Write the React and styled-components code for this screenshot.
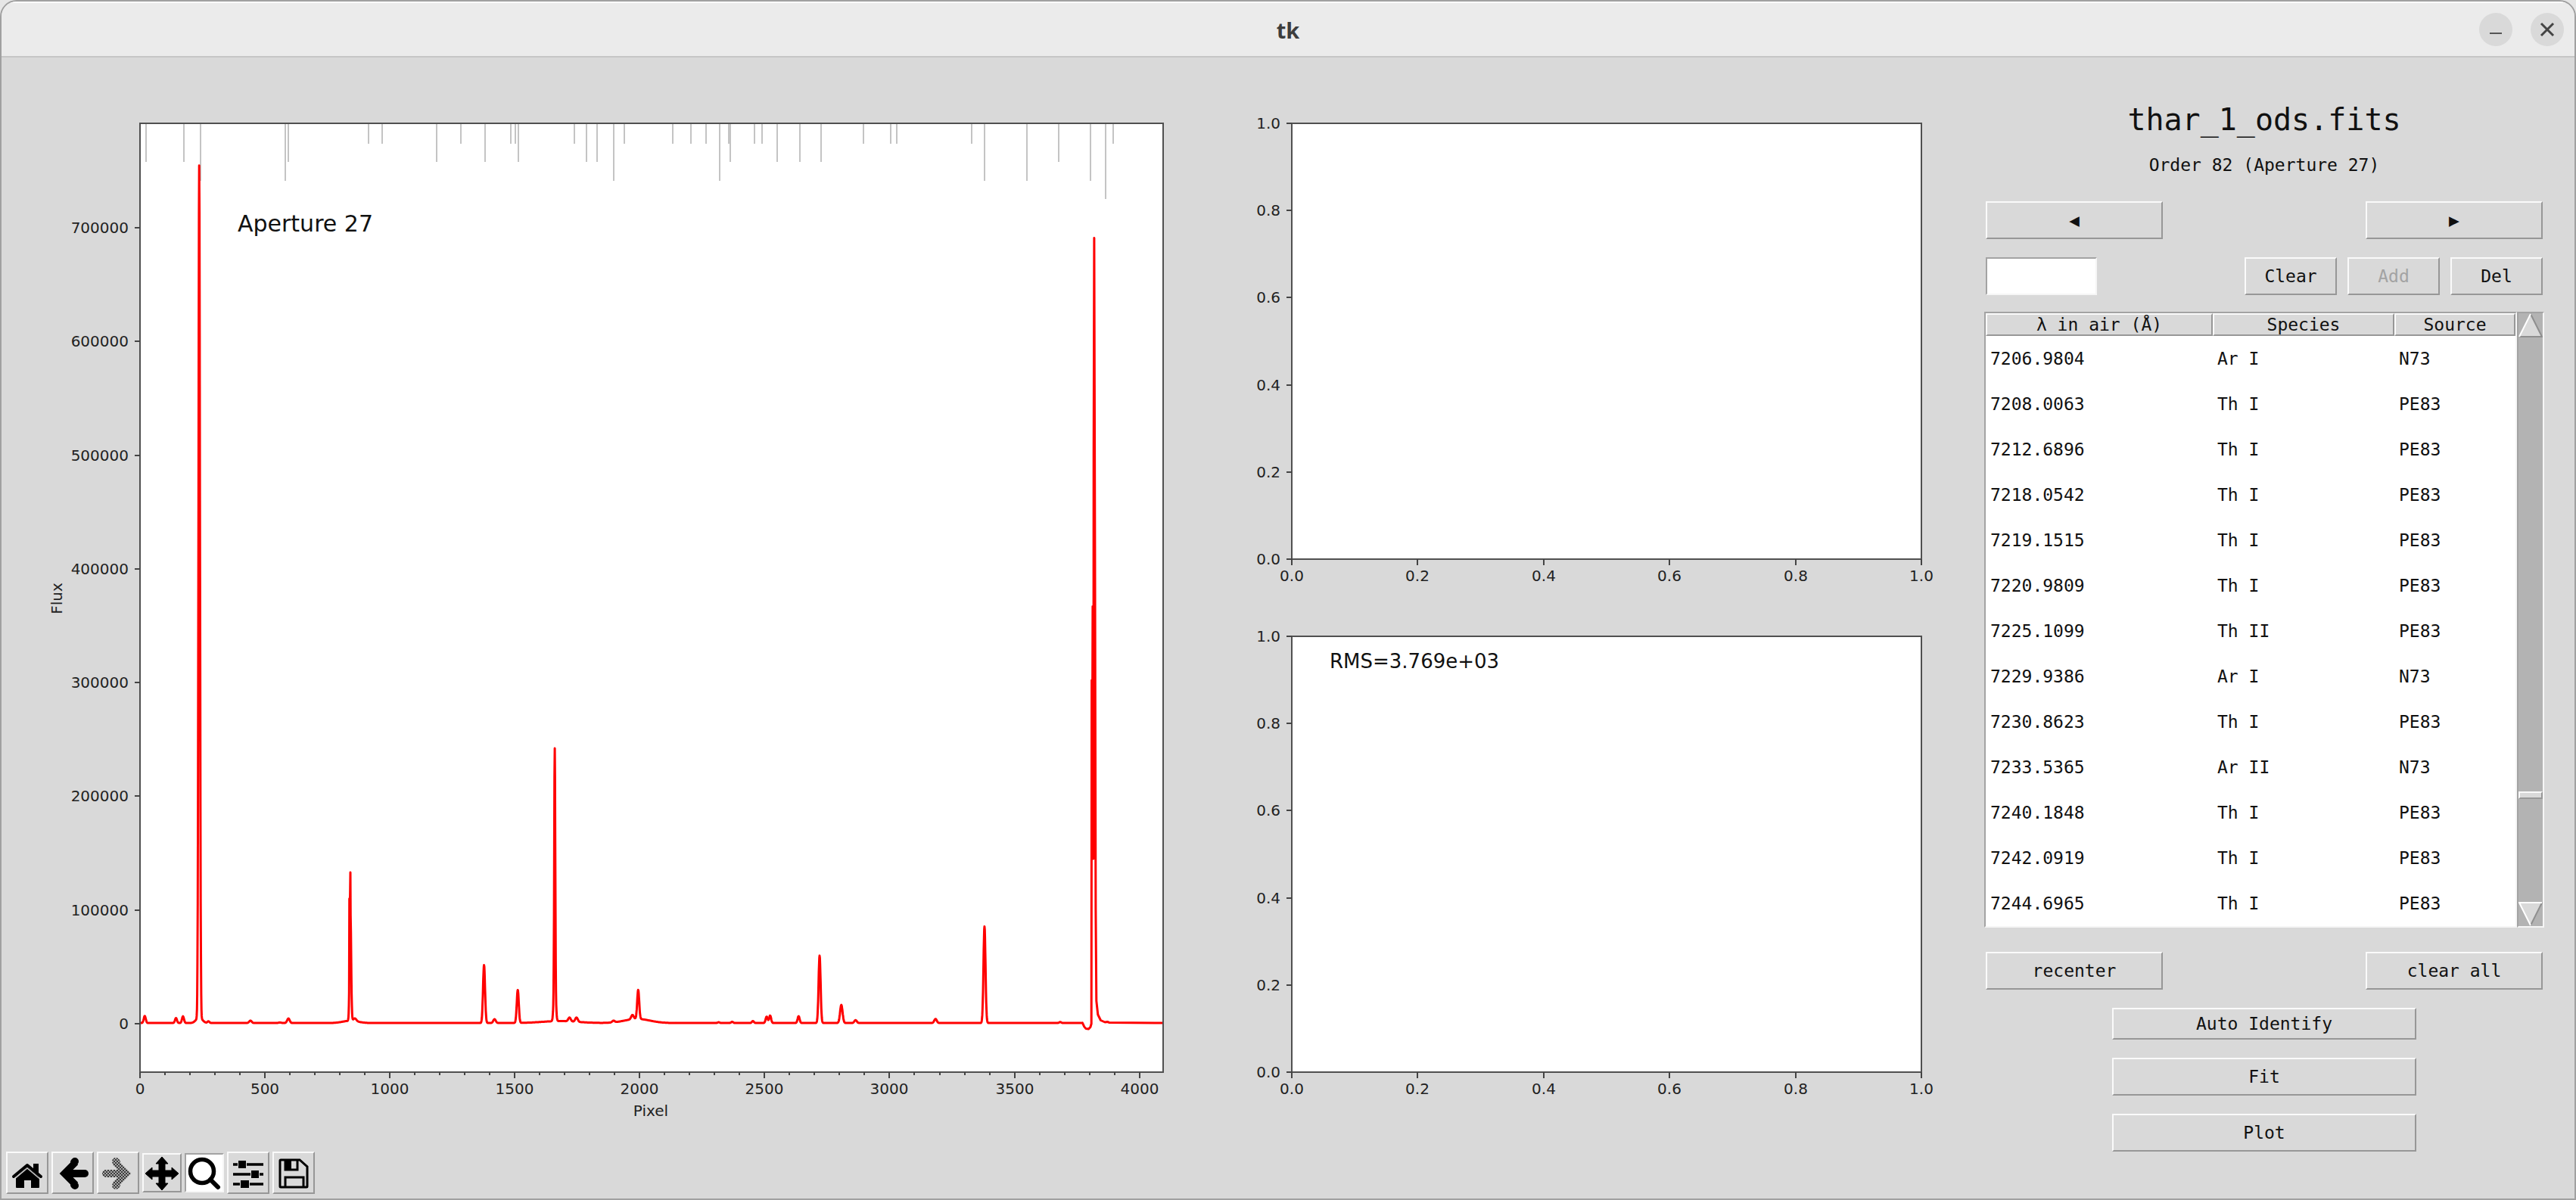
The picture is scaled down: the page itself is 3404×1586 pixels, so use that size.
import React from "react";
import styled, { createGlobalStyle, css } from "styled-components";

const LINES = [
  ["7206.9804", "Ar I", "N73"],
  ["7208.0063", "Th I", "PE83"],
  ["7212.6896", "Th I", "PE83"],
  ["7218.0542", "Th I", "PE83"],
  ["7219.1515", "Th I", "PE83"],
  ["7220.9809", "Th I", "PE83"],
  ["7225.1099", "Th II", "PE83"],
  ["7229.9386", "Ar I", "N73"],
  ["7230.8623", "Th I", "PE83"],
  ["7233.5365", "Ar II", "N73"],
  ["7240.1848", "Th I", "PE83"],
  ["7242.0919", "Th I", "PE83"],
  ["7244.6965", "Th I", "PE83"],
];

// [pixel, flux, sigma]
const PEAKS = [
  [19, 6200, 4],
  [144, 4400, 4],
  [172, 5900, 4],
  [237, 749000, 3],
  [237, 5000, 12],
  [274, 1500, 4],
  [442, 2100, 5],
  [560, 500, 5],
  [594, 4000, 5],
  [842, 98000, 3],
  [842, 2000, 30],
  [860, 2400, 6],
  [1377, 51000, 4],
  [1419, 3400, 5],
  [1512, 29000, 4],
  [1660, 202000, 2],
  [1660, 38000, 4],
  [1680, 1700, 70],
  [1719, 3400, 5],
  [1747, 3800, 5],
  [1895, 1500, 5],
  [1971, 3800, 5],
  [1994, 25500, 4],
  [1990, 3600, 50],
  [2316, 700, 4],
  [2370, 1100, 4],
  [2453, 1700, 4],
  [2508, 5600, 4],
  [2522, 6600, 4],
  [2636, 6000, 4],
  [2720, 59200, 4],
  [2807, 15900, 5],
  [2864, 2500, 5],
  [3184, 3600, 5],
  [3380, 84900, 4],
  [3683, 900, 4],
];

const SATURATED = [
  [3772, 700],
  [3779, -2600],
  [3786, -4400],
  [3796, -4700],
  [3804, -3000],
  [3808, 0],
  [3809, 302000],
  [3811, 200000],
  [3813, 367000],
  [3816, 145000],
  [3817, 500000],
  [3819, 691000],
  [3822, 420000],
  [3825, 100000],
  [3828, 20000],
  [3834, 8000],
  [3845, 3000],
  [3862, 1300],
  [3872, 1700],
  [3880, 900],
];

const DOUBLE_TIP = { 838: 110000, 840: 103000, 841: 118000, 842: 133000 };

// [pixel, length]
const MARKERS = [
  [24, 51], [175, 51], [241, 76], [582, 76], [594, 51], [914, 27], [970, 27],
  [1188, 51], [1285, 27], [1381, 51], [1484, 27], [1503, 27], [1515, 51],
  [1739, 27], [1787, 51], [1829, 51], [1897, 76], [1938, 27], [2132, 27],
  [2206, 27], [2266, 27], [2320, 76], [2357, 27], [2363, 51], [2459, 27],
  [2489, 27], [2549, 51], [2640, 51], [2725, 51], [2895, 27], [3005, 27],
  [3028, 27], [3330, 27], [3379, 76], [3549, 76], [3676, 51], [3803, 76],
  [3866, 100], [3895, 27],
];

const fluxAt = (x) => {
  if (DOUBLE_TIP[x]) return DOUBLE_TIP[x];
  return PEAKS.reduce((sum, [center, height, sigma]) => {
    const d = (x - center) / sigma;
    return sum + height * Math.exp((-d * d) / 2);
  }, 600);
};

const buildSpectrum = () => {
  const points = [];
  for (let x = 0; x < 3772; x++) points.push([x, fluxAt(x)]);
  return [...points, ...SATURATED, [4095, 600]];
};

const SPECTRUM = buildSpectrum();
const range = (from, to, step) => {
  const out = [];
  for (let v = from; v <= to; v += step) out.push(v);
  return out;
};
const UNIT_TICKS = [0, 0.2, 0.4, 0.6, 0.8, 1];

const Axes = (props) => {
  const { width, height, box, xScale, yScale, xTicks, yTicks } = props;
  const { minorTicks = [], format = String, label, children } = props;
  const bottom = box.y + box.h;
  return (
    <Chart viewBox={`0 0 ${width} ${height}`} role="img" aria-label={label}>
      <rect x={box.x} y={box.y} width={box.w} height={box.h} fill="#fff" />
      {children}
      <rect
        x={box.x}
        y={box.y}
        width={box.w}
        height={box.h}
        fill="none"
        stroke="#505050"
        strokeWidth="2"
      />
      {minorTicks.map((v) => (
        <TickLine key={v} x1={xScale(v)} x2={xScale(v)} y1={bottom} y2={bottom + 4} />
      ))}
      {xTicks.map((v) => (
        <g key={v}>
          <TickLine x1={xScale(v)} x2={xScale(v)} y1={bottom} y2={bottom + 8} />
          <TickText x={xScale(v)} y={bottom + 29} textAnchor="middle">
            {format(v)}
          </TickText>
        </g>
      ))}
      {yTicks.map((v) => (
        <g key={v}>
          <TickLine x1={box.x - 7} x2={box.x} y1={yScale(v)} y2={yScale(v)} />
          <TickText x={box.x - 15} y={yScale(v) + 7} textAnchor="end">
            {format(v)}
          </TickText>
        </g>
      ))}
    </Chart>
  );
};

const SpectrumChart = () => {
  const box = { x: 123, y: 23, w: 1352, h: 1254 };
  const xScale = (v) => box.x + Math.round((v / 4095) * box.w);
  const yScale = (v) => Math.round(1213 - v * 0.001503);
  const path = SPECTRUM.map(
    ([x, y]) =>
      `${(box.x + (x / 4095) * box.w).toFixed(1)},${(1213 - y * 0.001503).toFixed(1)}`
  ).join(" ");
  return (
    <Axes
      label="Spectrum of aperture 27"
      width={1480}
      height={1360}
      box={box}
      xScale={xScale}
      yScale={yScale}
      xTicks={range(0, 4000, 500)}
      minorTicks={range(0, 4000, 100)}
      yTicks={range(0, 700000, 100000)}
    >
      {MARKERS.map(([x, len]) => (
        <line
          key={x}
          x1={xScale(x)}
          x2={xScale(x)}
          y1={box.y}
          y2={box.y + len}
          stroke="#c4c4c4"
          strokeWidth="2"
        />
      ))}
      <polyline
        points={path}
        fill="none"
        stroke="#f00"
        strokeWidth="3"
        strokeLinejoin="round"
      />
      <ChartNote x="252" y="166" size={30}>
        Aperture 27
      </ChartNote>
      <TickText x="798" y="1335" textAnchor="middle">
        Pixel
      </TickText>
      <TickText transform="translate(20 651) rotate(-90)" textAnchor="middle">
        Flux
      </TickText>
    </Axes>
  );
};

const UnitChart = ({ label, note }) => {
  const box = { x: 57, y: 23, w: 832, h: 576 };
  return (
    <Axes
      label={label}
      width={910}
      height={650}
      box={box}
      xScale={(v) => Math.round(box.x + v * box.w)}
      yScale={(v) => Math.round(box.y + box.h - v * box.h)}
      xTicks={UNIT_TICKS}
      yTicks={UNIT_TICKS}
      format={(v) => v.toFixed(1)}
    >
      {note && (
        <ChartNote x="107" y="65" size={26}>
          {note}
        </ChartNote>
      )}
    </Axes>
  );
};

const HomeIcon = () => (
  <Icon viewBox="2 2 52 52">
    <path d="M28 21 44 34V47Q44 48 43 48H33V38H24V48H14Q13 48 13 47V34Z" />
    <path d="M36 16h7v14l-7-6z" />
    <path
      d="M10 33 28 18 46 33"
      fill="none"
      stroke="#000"
      strokeWidth="4"
      strokeLinecap="round"
      strokeLinejoin="round"
    />
    <path d="M12 35.5 28 22 44 35.5" fill="none" stroke="#d9d9d9" strokeWidth="1.2" />
  </Icon>
);

const ArrowPath = ({ paint }) => (
  <g fill="none" stroke={paint} strokeWidth="10">
    <path d="M32 14 17 29 32 44" strokeWidth="9" />
    <path d="M31 13 30 14M31 45 30 44" strokeLinecap="round" />
    <path d="M17 29H44" />
    <path d="M43 29H44" strokeLinecap="round" />
  </g>
);

const BackIcon = () => (
  <Icon viewBox="2 2 52 52">
    <ArrowPath paint="#000" />
  </Icon>
);

const ForwardIcon = () => (
  <Icon viewBox="2 2 52 52">
    <defs>
      <pattern id="stipple" width="4" height="4" patternUnits="userSpaceOnUse">
        <rect width="4" height="4" fill="#a8a8a8" />
        <rect width="2" height="2" fill="#3c3c3c" />
        <rect x="2" y="2" width="2" height="2" fill="#3c3c3c" />
      </pattern>
    </defs>
    <g transform="translate(56 0) scale(-1 1)">
      <ArrowPath paint="url(#stipple)" />
    </g>
  </Icon>
);

const PanIcon = () => (
  <Icon small viewBox="2 2 48 48">
    <path
      d="M26 5 34 14H30V23H39V19L48 27 39 35V31H30V40H34L26 49 18 40H22V31H13V35L4 27 13 19V23H22V14H18Z"
      stroke="#000"
      strokeWidth="1"
      strokeLinejoin="round"
    />
  </Icon>
);

const SearchIcon = () => (
  <Icon small viewBox="2 2 48 48">
    <circle cx="23" cy="24" r="15.5" fill="none" stroke="#000" strokeWidth="5.5" />
    <path d="M34 35 44 45" stroke="#000" strokeWidth="6" strokeLinecap="round" />
  </Icon>
);

const SlidersIcon = () => (
  <Icon viewBox="2 2 52 52">
    <path
      d="M8 17H14M26 17H48M8 30H31M43 30H48M8 43H17M30 43H48"
      stroke="#000"
      strokeWidth="3.5"
    />
    <path d="M15 12h10v10H15zM32 25h10v10H32zM18 38h11v10H18z" />
  </Icon>
);

const SaveIcon = () => (
  <Icon viewBox="2 2 52 52">
    <path
      d="M11 11H36L46 20V46Q46 47 45 47H11Q10 47 10 46V12Q10 11 11 11ZM17 47V34H41V47M33 11V24H17V11"
      fill="none"
      stroke="#000"
      strokeWidth="3"
    />
    <path d="M16 11h9v14h-9z" />
  </Icon>
);

const TOOLS = [
  { name: "Home", icon: HomeIcon },
  { name: "Back", icon: BackIcon },
  { name: "Forward", icon: ForwardIcon, disabled: true },
  { name: "Pan", icon: PanIcon, toggle: true },
  { name: "Zoom", icon: SearchIcon, toggle: true, active: true },
  { name: "Subplots", icon: SlidersIcon },
  { name: "Save", icon: SaveIcon },
];

const LineTable = () => (
  <TableArea>
    <TableFrame>
      <Table>
        <colgroup>
          <col width="300" />
          <col width="240" />
          <col width="160" />
        </colgroup>
        <thead>
          <tr>
            <HeadCell>λ in air (Å)</HeadCell>
            <HeadCell>Species</HeadCell>
            <HeadCell>Source</HeadCell>
          </tr>
        </thead>
        <tbody>
          {LINES.map((line) => (
            <tr key={line[0]}>
              {line.map((value) => (
                <Cell key={value}>{value}</Cell>
              ))}
            </tr>
          ))}
        </tbody>
      </Table>
    </TableFrame>
    <Scrollbar>
      <ScrollArrow aria-label="Scroll up">
        <svg width="32" height="32" viewBox="0 0 32 32">
          <path d="M16 1 31 31H1Z" fill="#d9d9d9" />
          <path d="M16 1 31 31H1" fill="none" stroke="#8f8f8f" strokeWidth="2" />
          <path d="M1 31 16 1" stroke="#fff" strokeWidth="2" />
        </svg>
      </ScrollArrow>
      <Trough>
        <Thumb />
      </Trough>
      <ScrollArrow aria-label="Scroll down">
        <svg width="32" height="32" viewBox="0 0 32 32">
          <path d="M1 1H31L16 31Z" fill="#d9d9d9" />
          <path d="M31 1 16 31" stroke="#8f8f8f" strokeWidth="2" />
          <path d="M31 1H1L16 31" fill="none" stroke="#fff" strokeWidth="2" />
        </svg>
      </ScrollArrow>
    </Scrollbar>
  </TableArea>
);

export default function App() {
  const [wavelength, setWavelength] = React.useState("");

  return (
    <>
      <GlobalStyle />
      <Window>
        <TitleBar>
          <WindowTitle>tk</WindowTitle>
          <WindowButtons>
            <WindowButton aria-label="Minimize">
              <svg width="44" height="44" stroke="#555" strokeWidth="2">
                <path d="M14 27H30" />
              </svg>
            </WindowButton>
            <WindowButton aria-label="Close">
              <svg width="44" height="44" stroke="#444" strokeWidth="3">
                <path d="M14 14 30 30M30 14 14 30" />
              </svg>
            </WindowButton>
          </WindowButtons>
        </TitleBar>
        <Body>
          <Main>
            <Figure>
              <SpectrumChart />
              <SideCharts>
                <UnitChart label="Wavelength fit" />
                <UnitChart label="Residuals" note="RMS=3.769e+03" />
              </SideCharts>
            </Figure>
            <Toolbar>
              {TOOLS.map(({ name, icon: ToolIcon, toggle, active, disabled }) => (
                <ToolButton
                  key={name}
                  aria-label={name}
                  disabled={disabled}
                  $toggle={toggle}
                  $active={active}
                >
                  <ToolIcon />
                </ToolButton>
              ))}
            </Toolbar>
          </Main>
          <Panel>
            <FileName>thar_1_ods.fits</FileName>
            <OrderText>Order 82 (Aperture 27)</OrderText>
            <Row>
              <Button $width={234} aria-label="Previous order">
                ◀
              </Button>
              <Button $width={234} aria-label="Next order">
                ▶
              </Button>
            </Row>
            <Row $tight>
              <Entry
                aria-label="Wavelength"
                value={wavelength}
                onChange={(e) => setWavelength(e.target.value)}
              />
              <ButtonGroup>
                <Button $width={122}>Clear</Button>
                <Button $width={122} disabled>
                  Add
                </Button>
                <Button $width={122}>Del</Button>
              </ButtonGroup>
            </Row>
            <LineTable />
            <Row>
              <Button $width={234}>recenter</Button>
              <Button $width={234}>clear all</Button>
            </Row>
            <Actions>
              <Button $width={402} $short>
                Auto Identify
              </Button>
              <Button $width={402}>Fit</Button>
              <Button $width={402}>Plot</Button>
            </Actions>
          </Panel>
        </Body>
      </Window>
    </>
  );
}

const GlobalStyle = createGlobalStyle`
  * {
    box-sizing: border-box;
  }
  body {
    margin: 0;
    background: #e6e6e6;
  }
`;

const raised = css`
  border: 2px solid;
  border-color: #fafafa #979797 #979797 #fafafa;
`;

const sunken = css`
  border: 2px solid;
  border-color: #a3a3a3 #f6f6f6 #f6f6f6 #a3a3a3;
`;

const mono = css`
  font-family: "DejaVu Sans Mono", monospace;
  font-size: 23px;
  line-height: 28px;
  font-weight: normal;
  color: #111;
`;

const Window = styled.div`
  min-height: 100vh;
  border: 2px solid #a0a0a0;
  border-radius: 22px 22px 0 0;
  background: #d9d9d9;
  overflow: hidden;
`;

const TitleBar = styled.header`
  display: grid;
  grid-template-columns: 1fr auto 1fr;
  align-items: center;
  height: 74px;
  padding: 0 14px;
  background: #ebebeb;
  border-top: 2px solid #fafafa;
  border-bottom: 2px solid #c6c6c6;
`;

const WindowTitle = styled.h1`
  grid-column: 2;
  margin: 0;
  font: bold 29px "Noto Sans", sans-serif;
  color: #3d3d3d;
`;

const WindowButtons = styled.div`
  display: flex;
  justify-content: flex-end;
  gap: 24px;
`;

const WindowButton = styled.button`
  width: 44px;
  height: 44px;
  padding: 0;
  border: none;
  border-radius: 50%;
  background: #d9d9d9;
`;

const Body = styled.div`
  display: flex;
`;

const Main = styled.main`
  flex: 1;
  min-width: 0;
`;

const Figure = styled.section`
  display: grid;
  grid-template-columns: 1480fr 910fr;
  gap: 108px;
  align-items: start;
  padding: 64px 62px 22px 60px;
`;

const SideCharts = styled.div`
  display: grid;
  gap: 28px;
`;

const Chart = styled.svg`
  display: block;
  width: 100%;
  height: auto;
`;

const TickLine = styled.line`
  stroke: #444;
  stroke-width: 2px;
`;

const TickText = styled.text`
  font-family: "DejaVu Sans", sans-serif;
  font-size: 20px;
  fill: #222;
`;

const ChartNote = styled.text`
  font-family: "DejaVu Sans", sans-serif;
  font-size: ${(props) => props.size}px;
  fill: #111;
`;

const Toolbar = styled.div`
  display: flex;
  align-items: center;
  gap: 4px;
  padding: 0 6px 6px;
`;

const ToolButton = styled.button`
  ${(props) => (props.$active ? sunken : raised)}
  width: ${(props) => (props.$toggle ? 52 : 56)}px;
  height: ${(props) => (props.$toggle ? 52 : 56)}px;
  padding: 0;
  background: ${(props) => (props.$active ? "#fff" : "#d9d9d9")};
`;

const Icon = styled.svg.withConfig({
  shouldForwardProp: (prop) => prop !== "small",
})`
  display: block;
  width: ${(props) => (props.small ? 48 : 52)}px;
  height: ${(props) => (props.small ? 48 : 52)}px;
`;

const Panel = styled.aside`
  display: flex;
  flex-direction: column;
  width: 780px;
  padding: 58px 40px 0 0;
`;

const FileName = styled.h2`
  ${mono}
  margin: 0 0 22px;
  font-size: 40px;
  line-height: 48px;
  text-align: center;
`;

const OrderText = styled.p`
  ${mono}
  margin: 0 0 34px;
  text-align: center;
`;

const Row = styled.div`
  display: flex;
  justify-content: space-between;
  margin: 0 2px ${(props) => (props.$tight ? 22 : 24)}px;
`;

const ButtonGroup = styled.div`
  display: flex;
  gap: 14px;
`;

const Button = styled.button`
  ${mono}
  ${raised}
  width: ${(props) => props.$width}px;
  height: ${(props) => (props.$short ? 42 : 50)}px;
  padding: 0;
  background: #d9d9d9;
  &:disabled {
    color: #a3a3a3;
  }
`;

const Entry = styled.input`
  ${mono}
  ${sunken}
  width: 147px;
  height: 50px;
  background: #fff;
`;

const TableArea = styled.div`
  display: flex;
  margin-bottom: 32px;
`;

const TableFrame = styled.div`
  ${sunken}
  flex: 1;
  background: #fff;
`;

const Table = styled.table`
  width: 100%;
  table-layout: fixed;
  border-collapse: separate;
  border-spacing: 0;
`;

const HeadCell = styled.th`
  ${mono}
  ${raised}
  height: 30px;
  padding: 0;
  line-height: 26px;
  background: #d9d9d9;
`;

const Cell = styled.td`
  ${mono}
  height: 60px;
  padding: 0 6px;
`;

const Scrollbar = styled.div`
  ${sunken}
  display: flex;
  flex-direction: column;
  width: 36px;
  background: #b3b3b3;
`;

const ScrollArrow = styled.button`
  height: 32px;
  padding: 0;
  border: none;
  background: none;
  svg {
    display: block;
  }
`;

const Trough = styled.div`
  display: flex;
  flex: 1;
  flex-direction: column;
  justify-content: flex-end;
  padding-bottom: 136px;
`;

const Thumb = styled.div`
  ${raised}
  height: 10px;
  background: #d9d9d9;
`;

const Actions = styled.div`
  display: flex;
  flex-direction: column;
  align-items: center;
  gap: 24px;
`;
